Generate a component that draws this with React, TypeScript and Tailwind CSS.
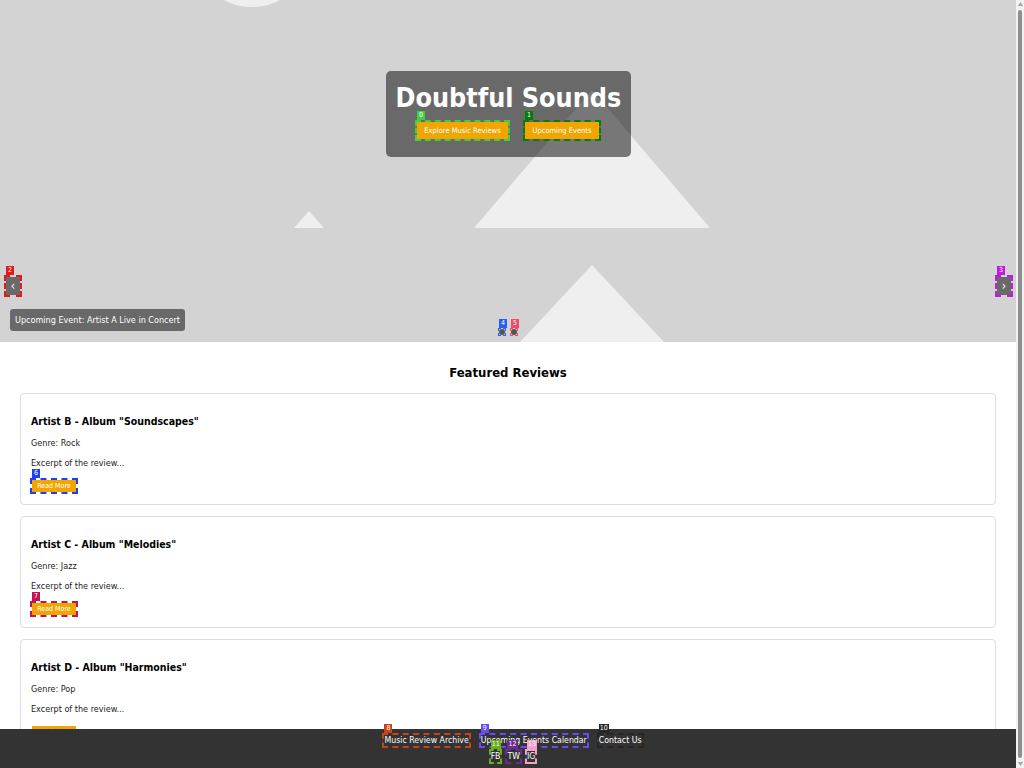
import type { ReactNode } from 'react';

type Tone = { line: string; tag: string };

const tones: Record<string, Tone> = {
  g0: { line: 'border-[#3fcf3f]', tag: 'bg-[#3fcf3f]' },
  g1: { line: 'border-[#0a7a0a]', tag: 'bg-[#0a7a0a]' },
  r2: { line: 'border-[#e01b1b]', tag: 'bg-[#e01b1b]' },
  p3: { line: 'border-[#c21be0]', tag: 'bg-[#c21be0]' },
  b4: { line: 'border-[#2461f2]', tag: 'bg-[#2461f2]' },
  r5: { line: 'border-[#f24a64]', tag: 'bg-[#f24a64]' },
  b6: { line: 'border-[#1f3ff0]', tag: 'bg-[#1f3ff0]' },
  c7: { line: 'border-[#c0145a]', tag: 'bg-[#c0145a]' },
  o8: { line: 'border-[#c5441b]', tag: 'bg-[#c5441b]' },
  v9: { line: 'border-[#6a4af2]', tag: 'bg-[#6a4af2]' },
  k10: { line: 'border-[#262626]', tag: 'bg-[#262626]' },
  g11: { line: 'border-[#6aae1c]', tag: 'bg-[#6aae1c]' },
  p12: { line: 'border-[#6a2c8e]', tag: 'bg-[#6a2c8e]' },
  k13: { line: 'border-[#f2a0cc]', tag: 'bg-[#f2a0cc]' },
};

// dashed box + numbered tag drawn over an element
function Mark({ n, tone, thin, children }: { n: number; tone: Tone; thin?: boolean; children: ReactNode }) {
  return (
    <span className="relative inline-flex">
      {children}
      <span
        aria-hidden
        className={`pointer-events-none absolute border-dashed ${
          thin ? '-inset-[1px] border' : '-inset-[2px] border-2'
        } ${tone.line}`}
      />
      <span
        aria-hidden
        className={`pointer-events-none absolute left-0 h-[9px] min-w-[8px] px-[1px] text-center text-[7px] leading-[9px] text-white ${
          thin ? 'bottom-[calc(100%+1px)]' : 'bottom-[calc(100%+2px)]'
        } ${tone.tag}`}
      >
        {n}
      </span>
    </span>
  );
}

const reviews = [
  { title: 'Artist B - Album "Soundscapes"', genre: 'Rock', mark: { n: 6, tone: tones.b6 } },
  { title: 'Artist C - Album "Melodies"', genre: 'Jazz', mark: { n: 7, tone: tones.c7 } },
  { title: 'Artist D - Album "Harmonies"', genre: 'Pop', mark: null },
];

function ReadMore() {
  return (
    <a className="flex h-[12px] w-[44px] items-center justify-center bg-[#f0a500] text-[7px] leading-none text-white">
      Read More
    </a>
  );
}

export default function App() {
  return (
    <div className="min-h-screen bg-white pr-[8px] font-['DejaVu_Sans_Condensed','DejaVu_Sans',sans-serif] font-stretch-condensed text-[#222]">
      <section className="relative flex h-[342px] flex-col items-center overflow-hidden bg-[#d3d3d3] pt-[71px]">
        <svg className="absolute inset-0 h-full w-full" viewBox="0 0 1016 342" preserveAspectRatio="none" aria-hidden>
          <circle cx="252" cy="-53" r="60" fill="#efefef" />
          <polygon points="294,228 309,211 324,228" fill="#efefef" />
          <polygon points="474,228 592,90 710,228" fill="#efefef" />
          <polygon points="520,342 592,265 664,342" fill="#efefef" />
        </svg>

        <div className="relative w-[245px] rounded-[5px] bg-black/50 px-[10px] pt-[11px] pb-[18px] text-center">
          <h1 className="whitespace-nowrap text-[26.7px] font-bold leading-[31px] text-white">Doubtful Sounds</h1>
          <div className="mt-[9px] flex justify-center gap-[17px]">
            <Mark n={0} tone={tones.g0}>
              <a className="flex h-[17px] w-[91px] items-center justify-center bg-[#f0a500] text-[7.5px] text-white">
                Explore Music Reviews
              </a>
            </Mark>
            <Mark n={1} tone={tones.g1}>
              <a className="flex h-[17px] w-[74px] items-center justify-center bg-[#f0a500] text-[7.5px] text-white">
                Upcoming Events
              </a>
            </Mark>
          </div>
        </div>

        <div className="absolute left-[6px] top-[277px] flex">
          <Mark n={2} tone={tones.r2}>
            <button className="flex h-[18px] w-[14px] items-center justify-center bg-black/50 text-[12px] leading-none text-white">
              ‹
            </button>
          </Mark>
        </div>
        <div className="absolute right-[5px] top-[277px] flex">
          <Mark n={3} tone={tones.p3}>
            <button className="flex h-[18px] w-[14px] items-center justify-center bg-black/50 text-[12px] leading-none text-white">
              ›
            </button>
          </Mark>
        </div>

        <p className="absolute left-[10px] top-[309px] h-[22px] rounded-[3px] bg-black/50 px-[5px] text-[9px] leading-[22px] text-white">
          Upcoming Event: Artist A Live in Concert
        </p>

        <div className="absolute left-1/2 top-[329px] flex -translate-x-1/2 gap-[6px]">
          <Mark n={4} tone={tones.b4} thin>
            <span className="block h-[6px] w-[6px] rounded-full bg-[#555]" />
          </Mark>
          <Mark n={5} tone={tones.r5} thin>
            <span className="block h-[6px] w-[6px] rounded-full bg-[#555]" />
          </Mark>
        </div>
      </section>

      <main className="px-[20px] pb-[50px]">
        <h2 className="mt-[23px] text-center text-[13px] font-bold leading-[16px] text-black">Featured Reviews</h2>
        <div className="mt-[12px] flex flex-col gap-[11px]">
          {reviews.map((r) => (
            <article
              key={r.title}
              className="flex flex-col items-start rounded-[4px] border border-[#ddd] bg-white px-[10px] pt-[19px] pb-[12px]"
            >
              <h3 className="text-[10.5px] font-bold leading-[16px] text-black">{r.title}</h3>
              <p className="mt-[6px] text-[9px] leading-[16px]">Genre: {r.genre}</p>
              <p className="mt-[4px] text-[9px] leading-[16px]">Excerpt of the review...</p>
              <div className="mt-[9px] ml-[1px] flex">
                {r.mark ? (
                  <Mark n={r.mark.n} tone={r.mark.tone}>
                    <ReadMore />
                  </Mark>
                ) : (
                  <ReadMore />
                )}
              </div>
            </article>
          ))}
        </div>
      </main>

      <footer className="fixed bottom-0 left-0 right-[8px] flex h-[39px] flex-col items-center gap-[5px] bg-[#333] pt-[6px] pl-[10px] text-[8.7px] leading-[11px] text-white">
        <nav className="flex gap-[12px]">
          <Mark n={8} tone={tones.o8}>
            <a>Music Review Archive</a>
          </Mark>
          <Mark n={9} tone={tones.v9}>
            <a>Upcoming Events Calendar</a>
          </Mark>
          <Mark n={10} tone={tones.k10}>
            <a>Contact Us</a>
          </Mark>
        </nav>
        <div className="flex gap-[7px]">
          <Mark n={11} tone={tones.g11}>
            <a>FB</a>
          </Mark>
          <Mark n={12} tone={tones.p12}>
            <a>TW</a>
          </Mark>
          <Mark n={13} tone={tones.k13}>
            <a>IG</a>
          </Mark>
        </div>
      </footer>

      {/* page scrollbar as it appears in the capture */}
      <div aria-hidden className="fixed right-0 top-0 flex h-screen w-[8px] flex-col items-center bg-[#f1f1f1]">
        <svg width="5" height="4" viewBox="0 0 5 4" className="mt-[2px]">
          <polygon points="0,4 2.5,0 5,4" fill="#a3a3a3" />
        </svg>
        <div className="mt-[4px] w-[4px] flex-1 rounded-full bg-[#8f8f8f]" />
        <svg width="5" height="4" viewBox="0 0 5 4" className="mt-[4px] mb-[2px]">
          <polygon points="0,0 2.5,4 5,0" fill="#a3a3a3" />
        </svg>
      </div>
    </div>
  );
}
